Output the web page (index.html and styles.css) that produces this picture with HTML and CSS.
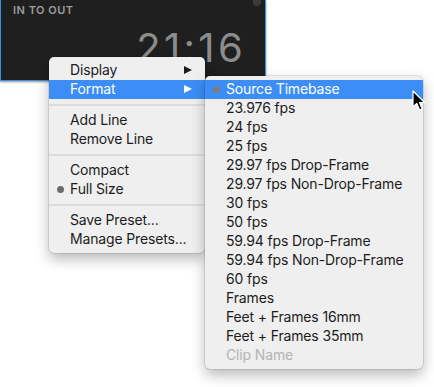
FILE: index.html
```html
<!DOCTYPE html>
<html>
<head>
<meta charset="utf-8">
<link rel="stylesheet" href="styles.css">
</head>
<body>
<div class="stage">
  <div class="panel">
    <div class="panel-label">IN TO OUT</div>
    <div class="panel-time">21:16</div>
    <div class="scroll-thumb"></div>
  </div>

  <div class="menu main-menu">
    <div class="item has-sub"><span class="label">Display</span><span class="arrow"></span></div>
    <div class="item has-sub active"><span class="label">Format</span><span class="arrow"></span></div>
    <div class="sep"></div>
    <div class="item"><span class="label">Add Line</span></div>
    <div class="item"><span class="label">Remove Line</span></div>
    <div class="sep"></div>
    <div class="item"><span class="label">Compact</span></div>
    <div class="item checked"><span class="label">Full Size</span></div>
    <div class="sep"></div>
    <div class="item"><span class="label">Save Preset...</span></div>
    <div class="item"><span class="label">Manage Presets...</span></div>
  </div>

  <div class="menu sub-menu">
    <div class="item checked active"><span class="label">Source Timebase</span></div>
    <div class="item"><span class="label">23.976 fps</span></div>
    <div class="item"><span class="label">24 fps</span></div>
    <div class="item"><span class="label">25 fps</span></div>
    <div class="item"><span class="label">29.97 fps Drop-Frame</span></div>
    <div class="item"><span class="label">29.97 fps Non-Drop-Frame</span></div>
    <div class="item"><span class="label">30 fps</span></div>
    <div class="item"><span class="label">50 fps</span></div>
    <div class="item"><span class="label">59.94 fps Drop-Frame</span></div>
    <div class="item"><span class="label">59.94 fps Non-Drop-Frame</span></div>
    <div class="item"><span class="label">60 fps</span></div>
    <div class="item"><span class="label">Frames</span></div>
    <div class="item"><span class="label">Feet + Frames 16mm</span></div>
    <div class="item"><span class="label">Feet + Frames 35mm</span></div>
    <div class="item disabled"><span class="label">Clip Name</span></div>
  </div>

  <svg class="cursor" width="14" height="22" viewBox="0 0 14 22">
    <path d="M1 1 L1 17 L4.8 13.4 L7.6 20 L10.2 18.9 L7.5 12.5 L12.6 12.5 Z" fill="#000" stroke="#fff" stroke-width="1.2" stroke-linejoin="round"/>
  </svg>
</div>
</body>
</html>
```

FILE: styles.css
```css
html, body {
  margin: 0;
  padding: 0;
  background: #ffffff;
}
body {
  font-family: Inter, "Noto Sans", "Liberation Sans", sans-serif;
  -webkit-font-smoothing: antialiased;
}
.stage {
  position: relative;
  width: 434px;
  height: 387px;
  overflow: hidden;
}
.panel {
  position: relative;
  width: 264px;
  height: 80px;
  background: #1f1f1f;
  border-left: 1px solid #3a8ee8;
  border-right: 1px solid #3a8ee8;
  border-bottom: 1px solid #3a8ee8;
  box-shadow: 0 1px 2px rgba(0,0,0,0.45);
  display: flex;
  flex-direction: column;
  align-items: stretch;
}
.panel-label {
  padding: 4px 0 0 12px;
  font-size: 11px;
  font-weight: 600;
  color: #9c9c9c;
  letter-spacing: 0.5px;
  line-height: 12px;
}
.panel-time {
  align-self: flex-end;
  padding: 11px 19px 0 0;
  font-size: 40px;
  font-weight: 400;
  line-height: 42px;
  color: #8c8c8c;
  letter-spacing: 3.3px;
}
.scroll-thumb {
  position: absolute;
  top: -4px;
  right: 4px;
  width: 8px;
  height: 10px;
  border-radius: 4px;
  background: #3b3b3b;
}
.menu {
  position: absolute;
  background: #efefef;
  border-radius: 5px;
  padding: 4px 0;
  box-shadow: 0 0 0 0.5px rgba(0,0,0,0.18), 0 6px 14px rgba(0,0,0,0.28);
  font-size: 14px;
  letter-spacing: -0.15px;
  color: #1c1c1c;
}
.main-menu {
  left: 49px;
  top: 57px;
  width: 156px;
}
.sub-menu {
  left: 205px;
  top: 76px;
  width: 218px;
}
.item {
  position: relative;
  height: 19px;
  line-height: 17px;
  padding-left: 21px;
  padding-bottom: 2px;
  box-sizing: border-box;
  display: flex;
  align-items: center;
  white-space: nowrap;
}
.item.active {
  background: #3c8df5;
  color: #ffffff;
}
.item.disabled {
  color: #b4b4b4;
}
.item.checked::before {
  content: "";
  position: absolute;
  left: 8px;
  top: 6px;
  width: 7px;
  height: 7px;
  border-radius: 50%;
  background: #6b6b6b;
}
.item.checked.active::before {
  background: #7d7d7d;
}
.arrow {
  position: absolute;
  left: 135px;
  top: 5px;
  width: 0;
  height: 0;
  border-top: 4.5px solid transparent;
  border-bottom: 4.5px solid transparent;
  border-left: 8px solid #1a1a1a;
}
.item.active .arrow {
  border-left-color: #ffffff;
}
.sep {
  height: 12px;
  display: flex;
  align-items: center;
}
.sep::after {
  content: "";
  display: block;
  width: 100%;
  height: 2px;
  background: #dcdcdc;
}
.cursor {
  position: absolute;
  left: 412px;
  top: 90px;
}
```
